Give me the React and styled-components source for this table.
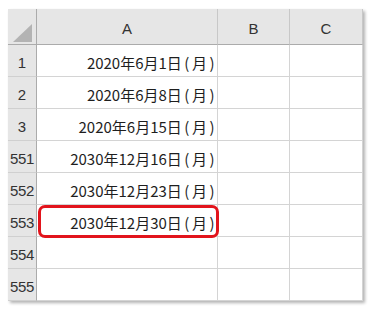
import styled, { createGlobalStyle } from "styled-components";

const GlobalStyle = createGlobalStyle`
  html, body {
    margin: 0;
    padding: 0;
    background: #ffffff;
  }
  body {
    font-family: "Noto Sans CJK JP", "Noto Sans", sans-serif;
    color: #222;
  }
`;

const columns = ["A", "B", "C"];

const rows = [
  { num: "1", date: "2020年6月1日", day: "月" },
  { num: "2", date: "2020年6月8日", day: "月" },
  { num: "3", date: "2020年6月15日", day: "月" },
  { num: "551", date: "2030年12月16日", day: "月" },
  { num: "552", date: "2030年12月23日", day: "月" },
  { num: "553", date: "2030年12月30日", day: "月", marked: true },
  { num: "554" },
  { num: "555" },
];

export default function App() {
  return (
    <>
      <GlobalStyle />
      <Page>
        <Sheet>
          <Corner>
            <svg width="19" height="18" viewBox="0 0 19 18">
              <polygon points="19,0 19,18 0,18" fill="#b3b3b3" />
            </svg>
          </Corner>
          {columns.map((c) => (
            <ColHeader key={c}>{c}</ColHeader>
          ))}

          {rows.map((row) => (
            <Row key={row.num} {...row} />
          ))}
        </Sheet>
      </Page>
    </>
  );
}

function Row({ num, date, day, marked }) {
  return (
    <>
      <RowHeader $wide={num.length > 2}>{num}</RowHeader>
      <Cell $marked={marked}>
        {date && (
          <>
            {date}
            <Paren>(</Paren>
            {day}
            <Paren>)</Paren>
          </>
        )}
      </Cell>
      <Cell />
      <Cell />
    </>
  );
}

const Page = styled.div`
  width: 375px;
  height: 318px;
  padding: 9px 0 0 8px;
  box-sizing: border-box;
`;

const Sheet = styled.div`
  display: grid;
  grid-template-columns: 29px 181px 72px 73px;
  grid-template-rows: 36px repeat(8, 32px);
  width: 355px;
  background: #fff;
  box-shadow: 2px 2px 3px rgba(0, 0, 0, 0.3);
`;

const HeaderBase = styled.div`
  background: #e6e6e6;
  border-right: 1px solid #c8c8c8;
  border-bottom: 1px solid #c8c8c8;
  box-sizing: border-box;
  display: flex;
  align-items: center;
  justify-content: center;
  font-family: "Liberation Sans", "Noto Sans", sans-serif;
  font-size: 15px;
  color: #333;
`;

const Corner = styled(HeaderBase)`
  align-items: flex-end;
  justify-content: flex-end;
  padding: 0 4px 2px 0;
  border-bottom-color: #ababab;
  border-right-color: #ababab;
`;

const ColHeader = styled(HeaderBase)`
  padding-top: 3px;
  border-bottom-color: #ababab;
`;

const RowHeader = styled(HeaderBase)`
  padding-top: 4px;
  border-right-color: #ababab;
  border-bottom-color: #d0d0d0;
  letter-spacing: ${({ $wide }) => ($wide ? "-0.4px" : "0")};
`;

const Paren = styled.span`
  margin: 0 2.5px;
`;

const Cell = styled.div`
  position: relative;
  box-sizing: border-box;
  border-right: 1px solid #d4d4d4;
  border-bottom: 1px solid #d4d4d4;
  display: flex;
  align-items: center;
  justify-content: flex-end;
  padding: 3px 0 0 0;
  font-size: 15px;
  white-space: nowrap;
  color: #1e1e1e;

  ${({ $marked }) =>
    $marked &&
    `
    &::after {
      content: "";
      position: absolute;
      top: 0;
      left: 1px;
      right: -2px;
      bottom: -2px;
      border: 3px solid #e2141c;
      border-radius: 7px;
    }
  `}
`;
